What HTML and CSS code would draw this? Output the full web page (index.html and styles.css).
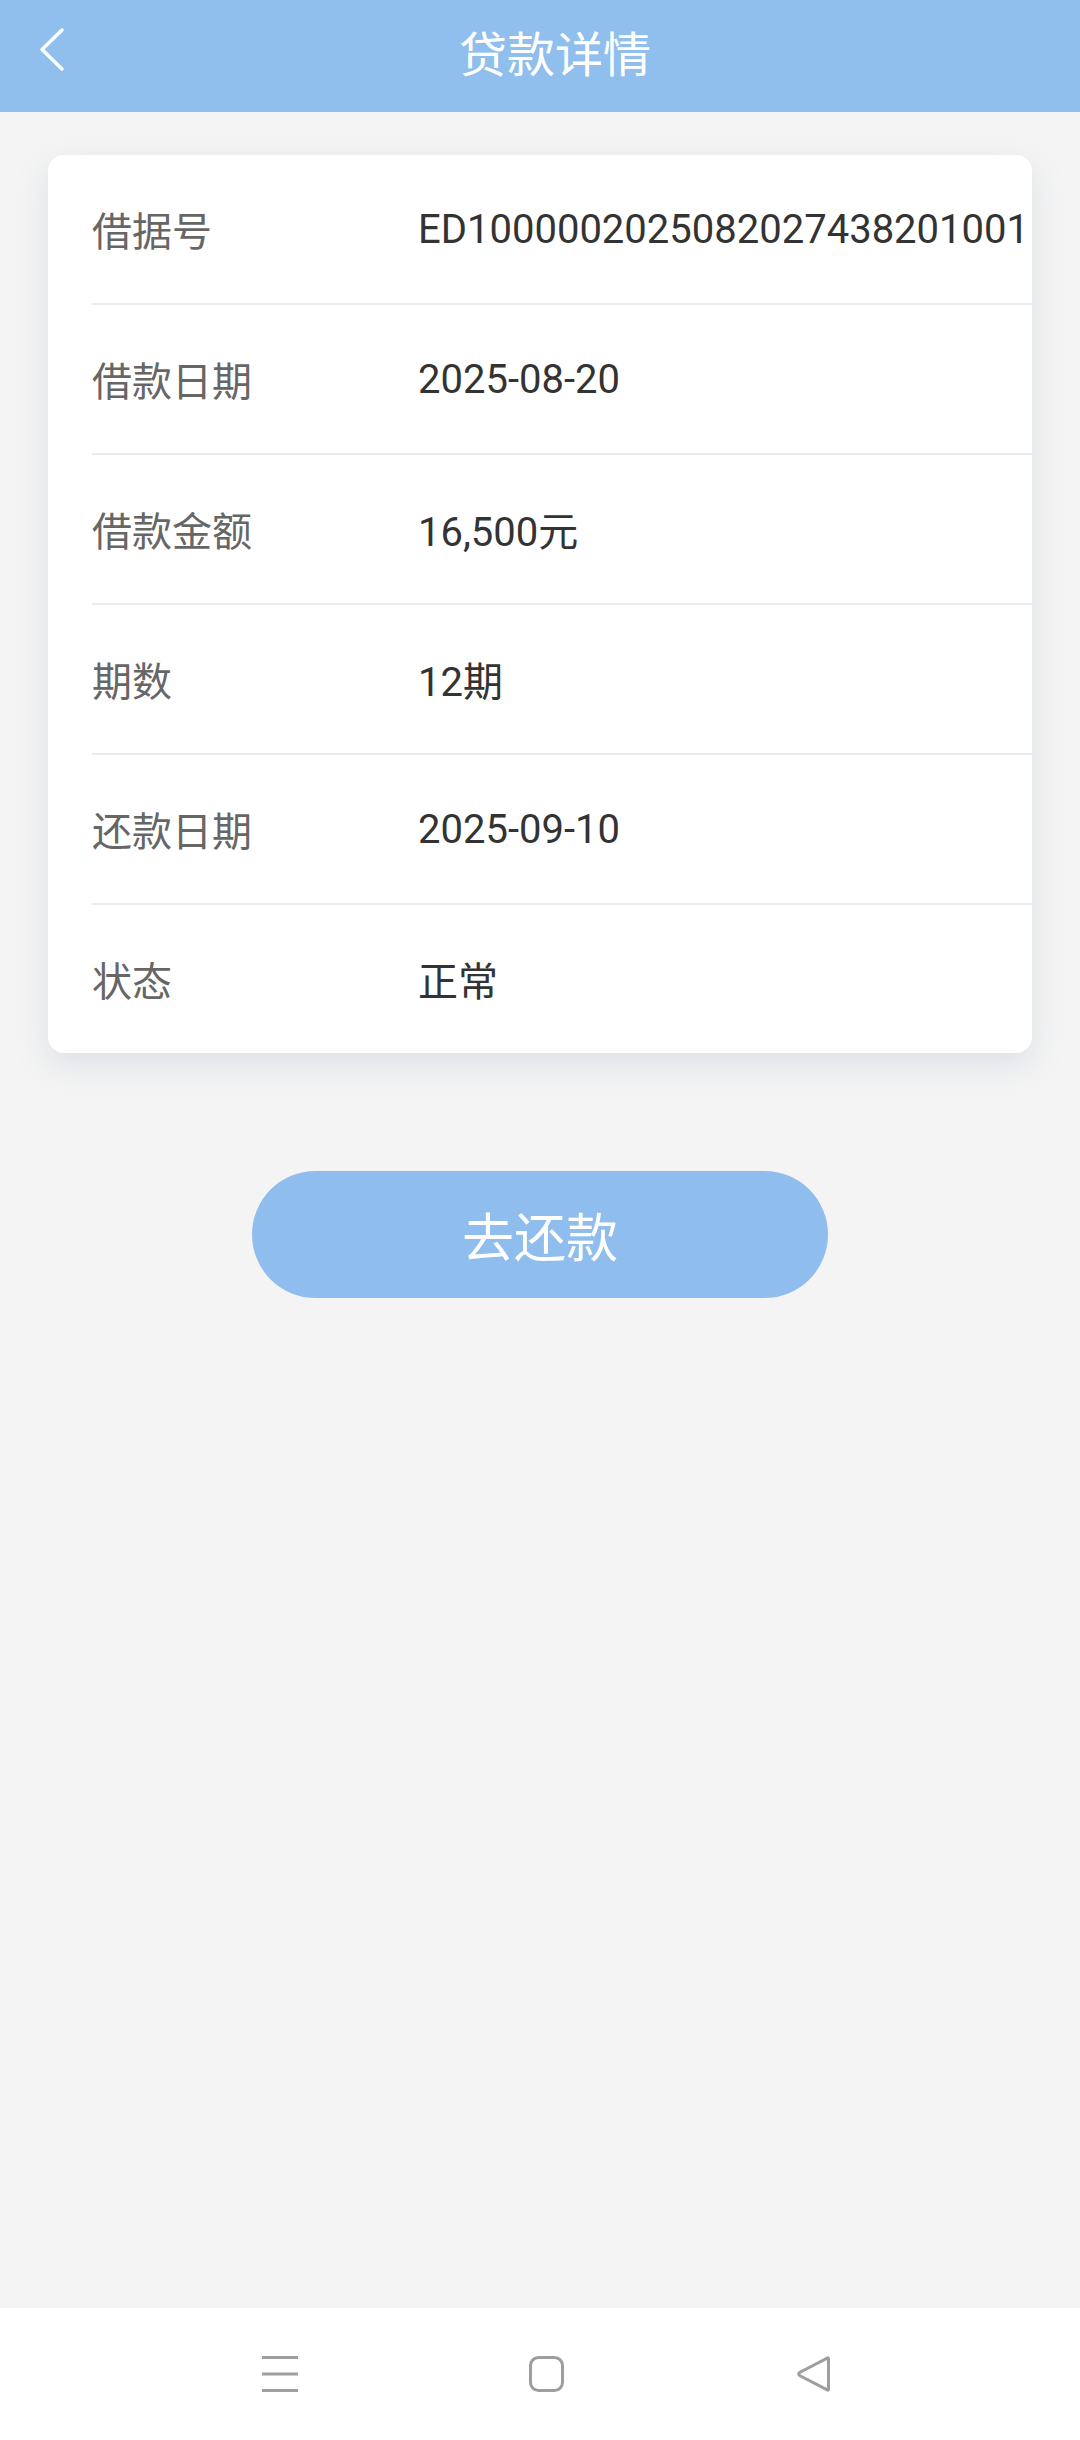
FILE: index.html
```html
<!DOCTYPE html>
<html lang="zh-CN">
<head>
<meta charset="utf-8">
<title>贷款详情</title>
<link rel="stylesheet" href="styles.css">
</head>
<body>
<div class="page">
  <header class="topbar">
    <svg class="back" width="40" height="50" viewBox="0 0 40 50" aria-hidden="true">
      <path d="M24 5 L4 24.5 L24 44" fill="none" stroke="#ffffff" stroke-width="3.5" stroke-linecap="round" stroke-linejoin="round"/>
    </svg>
    <h1 class="title">贷款详情</h1>
  </header>

  <main class="content">
    <section class="card">
      <div class="row"><span class="label">借据号</span><span class="value">ED1000002025082027438201001</span></div>
      <div class="row"><span class="label">借款日期</span><span class="value">2025-08-20</span></div>
      <div class="row"><span class="label">借款金额</span><span class="value">16,500元</span></div>
      <div class="row"><span class="label">期数</span><span class="value">12期</span></div>
      <div class="row"><span class="label">还款日期</span><span class="value">2025-09-10</span></div>
      <div class="row"><span class="label">状态</span><span class="value">正常</span></div>
    </section>

    <button class="repay" type="button">去还款</button>
  </main>

  <nav class="navbar">
    <svg class="nav-icon" width="36" height="36" viewBox="0 0 36 36" aria-hidden="true">
      <g stroke="#9e9e9e" stroke-width="3">
        <line x1="0" y1="1.5" x2="36" y2="1.5"/>
        <line x1="0" y1="18" x2="36" y2="18"/>
        <line x1="0" y1="34.5" x2="36" y2="34.5"/>
      </g>
    </svg>
    <svg class="nav-icon" width="36" height="36" viewBox="0 0 36 36" aria-hidden="true">
      <rect x="1.5" y="1.5" width="32" height="33" rx="8" fill="none" stroke="#9e9e9e" stroke-width="3"/>
    </svg>
    <svg class="nav-icon" width="36" height="36" viewBox="0 0 36 36" aria-hidden="true">
      <path d="M32.5 3 L32.5 33 Q32.5 35 30.8 33.6 L3.5 19.5 Q2 18 3.5 16.5 L30.8 2.4 Q32.5 1 32.5 3 Z" fill="none" stroke="#9e9e9e" stroke-width="3" stroke-linejoin="round"/>
    </svg>
  </nav>
</div>
</body>
</html>
```

FILE: styles.css
```css
* {
  box-sizing: border-box;
}

html, body {
  margin: 0;
  padding: 0;
}

body {
  width: 1080px;
  height: 2440px;
  background: #f4f4f4;
  font-family: Roboto, "Noto Sans CJK SC", "Noto Sans", sans-serif;
  overflow: hidden;
}

.page {
  display: flex;
  flex-direction: column;
  height: 2440px;
}

.topbar {
  position: relative;
  height: 112px;
  flex: 0 0 112px;
  background: #90bfee;
  display: flex;
  align-items: center;
  justify-content: center;
  padding-left: 30px;
}

.back {
  position: absolute;
  left: 38px;
  top: 25px;
}

.title {
  margin: 0;
  font-family: "Noto Sans CJK SC", sans-serif;
  font-weight: 400;
  font-size: 48px;
  line-height: 1;
  color: #ffffff;
  margin-top: -10px;
}

.content {
  flex: 1 1 auto;
  display: flex;
  flex-direction: column;
  align-items: center;
  padding-top: 43px;
}

.card {
  width: 984px;
  background: #ffffff;
  border-radius: 16px;
  padding-left: 44px;
  box-shadow: 0 12px 30px rgba(140, 160, 185, 0.22);
  overflow: hidden;
}

.row {
  height: 150px;
  display: flex;
  align-items: center;
  border-bottom: 2px solid #ebebeb;
  white-space: nowrap;
}

.row:last-child {
  height: 148px;
  border-bottom: none;
}

.label {
  width: 326px;
  flex: 0 0 326px;
  font-size: 40px;
  color: #666666;
  font-family: "Noto Sans CJK SC", sans-serif;
}

.value {
  font-size: 40px;
  color: #333333;
}

.repay {
  margin-top: 118px;
  width: 576px;
  height: 127px;
  border: none;
  border-radius: 64px;
  background: #8fbeee;
  color: #ffffff;
  font-family: "Noto Sans CJK SC", sans-serif;
  font-size: 52px;
  padding: 0;
}

.navbar {
  flex: 0 0 132px;
  height: 132px;
  background: #ffffff;
  display: flex;
  align-items: center;
  justify-content: center;
  gap: 231px;
  padding-left: 13px;
}

.nav-icon {
  display: block;
}
```
